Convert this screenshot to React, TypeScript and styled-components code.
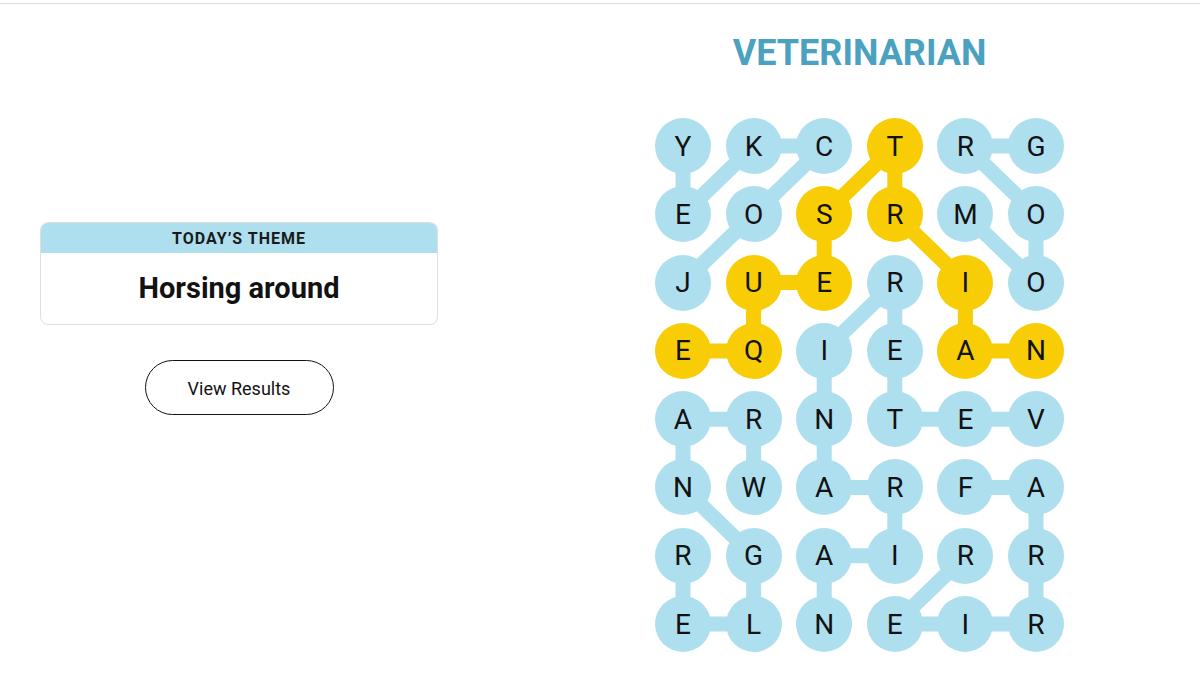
import React, { ReactElement } from 'react';
import styled, { createGlobalStyle } from 'styled-components';

const COLS = 6;
const ROWS = 8;
const TILE = 56;
const COL_STEP = 70.6;
const ROW_STEP = 68.3;

const BLUE = '#aedfee';
const YELLOW = '#f8cd05';

const LETTERS = ['YKCTRG', 'EOSRMO', 'JUERIO', 'EQIEAN', 'ARNTEV', 'NWARFA', 'RGAIRR', 'ELNEIR'];

// spangram cells, "row-col"
const FOUND = ['0-3', '1-2', '1-3', '2-1', '2-2', '2-4', '3-0', '3-1', '3-4', '3-5'];

// [r1, c1, r2, c2, spangram?]
const LINKS: [number, number, number, number, boolean?][] = [
  [0, 0, 1, 0],
  [0, 1, 1, 0],
  [0, 1, 0, 2],
  [0, 2, 1, 1],
  [0, 3, 1, 2, true],
  [0, 3, 1, 3, true],
  [0, 4, 0, 5],
  [0, 4, 1, 5],
  [1, 1, 2, 0],
  [1, 2, 2, 2, true],
  [1, 3, 2, 4, true],
  [1, 4, 2, 5],
  [1, 5, 2, 5],
  [2, 1, 2, 2, true],
  [2, 1, 3, 1, true],
  [2, 3, 3, 2],
  [2, 3, 3, 3],
  [2, 4, 3, 4, true],
  [3, 0, 3, 1, true],
  [3, 4, 3, 5, true],
  [3, 2, 4, 2],
  [3, 3, 4, 3],
  [4, 0, 4, 1],
  [4, 0, 5, 0],
  [4, 1, 5, 1],
  [4, 2, 5, 2],
  [4, 3, 4, 4],
  [4, 4, 4, 5],
  [5, 2, 5, 3],
  [5, 4, 5, 5],
  [5, 0, 6, 1],
  [5, 3, 6, 3],
  [5, 5, 6, 5],
  [6, 2, 6, 3],
  [6, 0, 7, 0],
  [6, 1, 7, 1],
  [6, 2, 7, 2],
  [6, 4, 7, 3],
  [6, 5, 7, 5],
  [7, 0, 7, 1],
  [7, 3, 7, 4],
  [7, 4, 7, 5],
];

const GlobalStyle = createGlobalStyle`
  body {
    margin: 0;
    background: #ffffff;
    font-family: Roboto, "Liberation Sans", sans-serif;
    color: #121212;
  }
`;

const Page = styled.div`
  width: 1200px;
  height: 675px;
  padding-top: 3px;
  box-sizing: border-box;
  overflow: hidden;
`;

const Main = styled.main`
  display: flex;
  border-top: 1px solid #dcdcdc;
  padding-left: 40px;
`;

const Side = styled.section`
  width: 398px;
  padding-top: 218px;
  display: flex;
  flex-direction: column;
  align-items: center;
`;

const ThemeCard = styled.div`
  width: 100%;
  border: 1px solid #dfdfdf;
  border-radius: 8px;
  overflow: hidden;
  box-sizing: border-box;
`;

const ThemeLabel = styled.div`
  background: ${BLUE};
  height: 30px;
  display: flex;
  align-items: center;
  justify-content: center;
  font-size: 16px;
  font-weight: 700;
  letter-spacing: 1px;
  color: #1a1a1a;
`;

const ThemeName = styled.div`
  height: 71px;
  display: flex;
  align-items: center;
  justify-content: center;
  font-size: 29px;
  font-weight: 700;
  padding-bottom: 2px;
  box-sizing: border-box;
`;

const ResultsButton = styled.button`
  margin-top: 35px;
  width: 189px;
  height: 55px;
  padding-top: 3px;
  border: 1px solid #121212;
  border-radius: 28px;
  background: #fff;
  font-family: Roboto, "Liberation Sans", sans-serif;
  font-size: 18px;
  color: #121212;
`;

const Play = styled.section`
  margin-left: 217px;
  width: ${(COLS - 1) * COL_STEP + TILE}px;
  display: flex;
  flex-direction: column;
  align-items: center;
`;

const Title = styled.h1`
  margin: 28px 0 0;
  font-size: 36px;
  line-height: 42px;
  font-weight: 700;
  color: #4aa2c0;
`;

const Board = styled.div`
  position: relative;
  margin-top: 44px;
  width: ${(COLS - 1) * COL_STEP + TILE}px;
  height: ${(ROWS - 1) * ROW_STEP + TILE}px;
`;

const Links = styled.svg`
  position: absolute;
  inset: 0;
  width: 100%;
  height: 100%;
`;

const Grid = styled.div`
  position: relative;
  display: grid;
  grid-template-columns: repeat(${COLS}, ${TILE}px);
  grid-auto-rows: ${TILE}px;
  column-gap: ${COL_STEP - TILE}px;
  row-gap: ${ROW_STEP - TILE}px;
`;

const Tile = styled.div<{ $found: boolean }>`
  width: ${TILE}px;
  height: ${TILE}px;
  border-radius: 50%;
  background: ${(p) => (p.$found ? YELLOW : BLUE)};
  display: flex;
  align-items: center;
  justify-content: center;
  font-size: 28px;
  font-weight: 400;
  color: #121212;
`;

const cx = (c: number) => c * COL_STEP + TILE / 2;
const cy = (r: number) => r * ROW_STEP + TILE / 2;

function App(): ReactElement {
  return (
    <Page>
      <GlobalStyle />
      <Main>
        <Side>
          <ThemeCard>
            <ThemeLabel>TODAY’S THEME</ThemeLabel>
            <ThemeName>Horsing around</ThemeName>
          </ThemeCard>
          <ResultsButton>View Results</ResultsButton>
        </Side>
        <Play>
          <Title>VETERINARIAN</Title>
          <Board>
            <Links>
              {LINKS.map(([r1, c1, r2, c2, span], idx) => (
                <line
                  key={idx}
                  x1={cx(c1)}
                  y1={cy(r1)}
                  x2={cx(c2)}
                  y2={cy(r2)}
                  stroke={span ? YELLOW : BLUE}
                  strokeWidth={15}
                />
              ))}
            </Links>
            <Grid>
              {LETTERS.map((row, r) =>
                row.split('').map((ch, c) => (
                  <Tile key={`${r}-${c}`} $found={FOUND.includes(`${r}-${c}`)}>
                    {ch}
                  </Tile>
                )),
              )}
            </Grid>
          </Board>
        </Play>
      </Main>
    </Page>
  );
}

export default App;
